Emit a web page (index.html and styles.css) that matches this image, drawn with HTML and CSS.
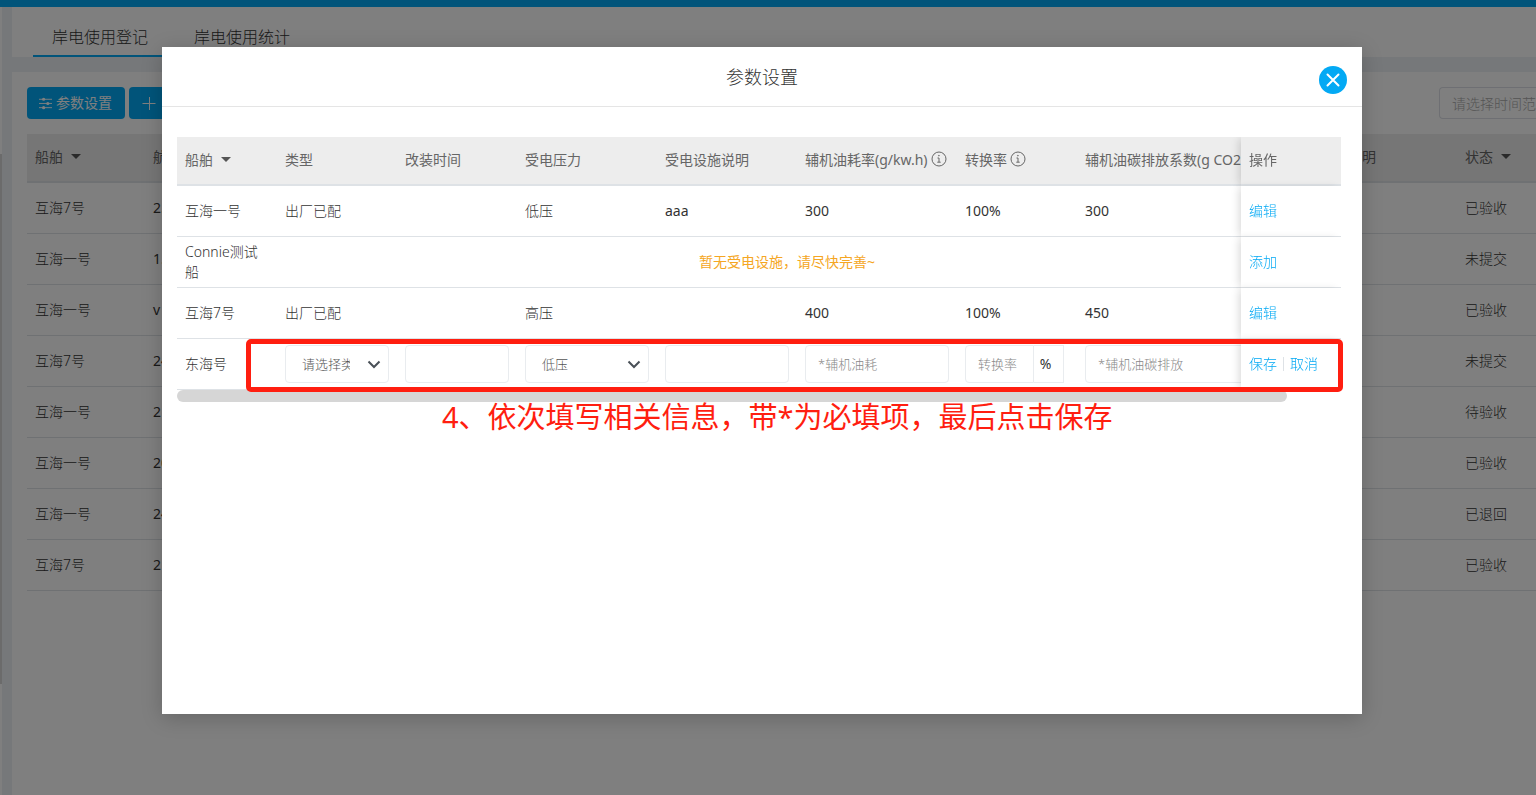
FILE: index.html
```html
<!DOCTYPE html>
<html lang="zh-CN">
<head>
<meta charset="utf-8">
<title>岸电使用登记</title>
<link rel="stylesheet" href="styles.css">
</head>
<body>
<div class="app">
  <header class="topbar"></header>
  <div class="layout">
    <aside class="side"><div class="side-thumb"></div></aside>
    <main class="main">
      <nav class="tabs">
        <a class="tab tab-active" href="#register">岸电使用登记</a>
        <a class="tab" href="#stats">岸电使用统计</a>
      </nav>
      <section class="card">
        <div class="toolbar">
          <button class="btn" type="button">
            <svg width="13" height="14" viewBox="0 0 14 14" fill="none" stroke="currentColor"><path d="M0 3h14M0 7.500h14M0 12h14"/><g fill="currentColor" stroke="none"><circle cx="5" cy="3" r="1.700"/><circle cx="9.500" cy="7.500" r="1.700"/><circle cx="5" cy="12" r="1.700"/></g></svg>
            <span>参数设置</span>
          </button>
          <button class="btn btn-add" type="button" aria-label="新增">
            <svg width="16" height="16" viewBox="0 0 16 16" fill="none" stroke="currentColor"><path d="M1.500 8.500h13M8.500 2v13"/></svg>
          </button>
          <input class="search" type="text" placeholder="请选择时间范围" aria-label="时间范围">
        </div>
        <table class="grid">
          <colgroup><col class="c-ship"><col><col class="c-note"><col class="c-state"></colgroup>
          <thead>
            <tr><th>船舶<i class="caret"></i></th><th>航次</th><th>说明</th><th>状态<i class="caret"></i></th></tr>
          </thead>
          <tbody>
            <tr><td>互海7号</td><td class="num">2.</td><td></td><td>已验收</td></tr>
            <tr><td>互海一号</td><td class="num">1.</td><td></td><td>未提交</td></tr>
            <tr><td>互海一号</td><td class="num">v</td><td></td><td>已验收</td></tr>
            <tr><td>互海7号</td><td class="num">24</td><td></td><td>未提交</td></tr>
            <tr><td>互海一号</td><td class="num">2</td><td></td><td>待验收</td></tr>
            <tr><td>互海一号</td><td class="num">20</td><td></td><td>已验收</td></tr>
            <tr><td>互海一号</td><td class="num">24</td><td></td><td>已退回</td></tr>
            <tr><td>互海7号</td><td class="num">2</td><td></td><td>已验收</td></tr>
          </tbody>
        </table>
      </section>
    </main>
  </div>
</div>

<div class="overlay">
  <div class="modal" role="dialog" aria-labelledby="modal-title">
    <div class="modal-head">
      <h1 class="modal-title" id="modal-title">参数设置</h1>
      <button class="close" type="button" aria-label="关闭">
        <svg width="28" height="28" viewBox="0 0 28 28" fill="none" stroke="#fff" stroke-width="2" stroke-linecap="round"><path d="M8.500 8.500l11 11M19.500 8.500l-11 11"/></svg>
      </button>
    </div>
    <div class="modal-body">
      <div class="panel">
        <div class="scroller">
          <table class="grid params">
            <colgroup><col class="w100"><col class="w120"><col class="w120"><col class="w140"><col class="w140"><col class="w160"><col class="w120"><col class="w220"><col class="w100"></colgroup>
            <thead>
              <tr>
                <th>船舶<i class="caret"></i></th><th>类型</th><th>改装时间</th><th>受电压力</th><th>受电设施说明</th>
                <th>辅机油耗率(g/kw.h)<svg class="info" viewBox="0 0 16 16" fill="none" stroke="currentColor"><circle cx="8" cy="8" r="7"/><path d="M6.500 7h1.500v4M6.300 11.200h3.400"/><circle cx="7.900" cy="4.700" r=".4"/></svg></th>
                <th>转换率<svg class="info" viewBox="0 0 16 16" fill="none" stroke="currentColor"><circle cx="8" cy="8" r="7"/><path d="M6.500 7h1.500v4M6.300 11.200h3.400"/><circle cx="7.900" cy="4.700" r=".4"/></svg></th>
                <th>辅机油碳排放系数(g CO2</th><th class="pin">操作</th>
              </tr>
            </thead>
            <tbody>
              <tr><td>互海一号</td><td>出厂已配</td><td></td><td>低压</td><td class="num">aaa</td><td class="num">300</td><td class="num">100%</td><td class="num">300</td><td class="pin"><a class="link" href="#edit">编辑</a></td></tr>
              <tr><td class="wrap">Connie测试船</td><td class="empty" colspan="7">暂无受电设施，请尽快完善~</td><td class="pin"><a class="link" href="#add">添加</a></td></tr>
              <tr><td>互海7号</td><td>出厂已配</td><td></td><td>高压</td><td></td><td class="num">400</td><td class="num">100%</td><td class="num">450</td><td class="pin"><a class="link" href="#edit">编辑</a></td></tr>
              <tr>
                <td>东海号</td>
                <td><div class="pick"><select class="field" aria-label="类型"><option>请选择类型</option></select><svg class="chev" viewBox="0 0 14 14" fill="none" stroke="#495057" stroke-width="2"><path d="M1.500 4.500L7 10l5.500-5.500"/></svg></div></td>
                <td><input class="field" type="text" aria-label="改装时间"></td>
                <td><div class="pick"><select class="field" aria-label="受电压力"><option>低压</option></select><svg class="chev" viewBox="0 0 14 14" fill="none" stroke="#495057" stroke-width="2"><path d="M1.500 4.500L7 10l5.500-5.500"/></svg></div></td>
                <td><input class="field" type="text" aria-label="受电设施说明"></td>
                <td><input class="field" type="text" placeholder="*辅机油耗" aria-label="辅机油耗率"></td>
                <td><div class="group"><input class="field" type="text" placeholder="转换率" aria-label="转换率"><span class="addon">%</span></div></td>
                <td><input class="field" type="text" placeholder="*辅机油碳排放" aria-label="辅机油碳排放系数"></td>
                <td class="pin"><div class="actions"><a class="link" href="#save">保存</a><span class="sep"></span><a class="link" href="#cancel">取消</a></div></td>
              </tr>
            </tbody>
          </table>
        </div>
        <div class="mark"></div>
      </div>
      <div class="hbar"></div>
      <p class="note">4、依次填写相关信息，带*为必填项，最后点击保存</p>
    </div>
  </div>
</div>
</body>
</html>
```

FILE: styles.css
```css
* { box-sizing: border-box; }

body {
  margin: 0;
  height: 100vh;
  overflow: hidden;
  position: relative;
  font-family: "Noto Sans", "Noto Sans CJK SC", sans-serif;
  font-size: 14px;
  line-height: 20px;
  color: #333;
}

button, input, select { font: inherit; }
a { text-decoration: none; color: inherit; }

.app { display: flex; flex-direction: column; height: 100%; background: #edf1f5; }
.topbar { height: 7px; background: #03a9f4; flex: none; }
.layout { display: flex; flex: 1; min-height: 0; gap: 10px; }
.side { width: 2px; background: #fff; padding-top: 147px; }
.side-thumb { height: 530px; background: #d6d6d6; }
.main { flex: 1; min-width: 0; display: flex; flex-direction: column; gap: 15px; }

.tabs { display: flex; height: 50px; padding-left: 21px; background: #fff; font-size: 16px; font-weight: 300; gap: 8px; }
.tab { padding: 20px 19px 0; }
.tab-active { border-bottom: 2px solid #03a9f4; }

.card { flex: 1; background: #fff; padding: 15px 0 0 15px; }
.toolbar { display: flex; gap: 4px; margin-bottom: 15px; }
.btn {
  display: flex; align-items: center; gap: 4px;
  height: 32px; padding: 0 13px 0 12px;
  border: 0; border-radius: 4px;
  background: #03a9f4; color: #fff;
}
.btn-add { width: 80px; }
.search {
  margin-left: auto; width: 97px; height: 32px; padding: 0 0 0 12px;
  border: 1px solid #dcdfe6; border-right: 0; border-radius: 4px 0 0 4px;
  background: #fff; font-weight: 300;
}
.search::placeholder { color: #aaa; }

.grid { width: 100%; table-layout: fixed; border-collapse: separate; border-spacing: 0; }
.grid th {
  height: 49px; padding: 0 8px 2px;
  text-align: left; font-weight: 400; white-space: nowrap;
  color: #666; background: #ededed; border-bottom: 2px solid #dee2e6;
}
.grid td { height: 51px; padding: 0 8px; border-bottom: 1px solid #dee2e6; font-weight: 300; }
.grid .num { font-weight: 400; }
.c-ship { width: 118px; }
.c-note { width: 117px; }
.c-state { width: 79px; }
.caret {
  display: inline-block; margin-left: 8px; vertical-align: 3px;
  border: 5px solid transparent; border-top-color: #555; border-bottom: 0;
}

.overlay {
  position: absolute; inset: 0;
  display: flex; justify-content: center;
  padding: 47px 12px 81px 0;
  background: rgba(0, 0, 0, .5);
}
.modal { width: 1200px; max-width: 100%; background: #fff; box-shadow: 0 4px 20px rgba(0, 0, 0, .2); }
.modal-head {
  display: flex; align-items: center; height: 60px; padding: 0 15px 0 43px;
  border-bottom: 1px solid #e5e5e5;
}
.modal-title { flex: 1; margin: 0; text-align: center; font-size: 18px; line-height: 24px; font-weight: 300; }
.close { display: flex; margin-top: 6px; padding: 0; border: 0; border-radius: 50%; background: #03a9f4; }
.modal-body { padding: 30px 21px 0 15px; }

.panel { position: relative; }
.scroller { overflow: hidden; }
.params { width: 1220px; }
.w100 { width: 100px; }
.w120 { width: 120px; }
.w140 { width: 140px; }
.w160 { width: 160px; }
.w220 { width: 220px; }
.info { width: 16px; height: 16px; margin-left: 3px; vertical-align: -2px; }
.pin { position: sticky; right: 0; box-shadow: -4px 0 8px -2px rgba(0, 0, 0, .15); }
.params td.pin { background: #fff; }
.params td.empty { text-align: center; color: #f5a623; font-weight: 400; }
.params td.wrap { word-break: break-all; }
.link { color: #03a9f4; }
.actions { display: flex; align-items: center; gap: 6px; white-space: nowrap; }
.sep { width: 1px; height: 14px; background: #dee2e6; }

.field {
  display: block; width: 100%; height: 38px; padding: 0 12px;
  border: 1px solid #e9ecef; border-radius: 4px;
  background: #fff; color: #555; font-size: 13px; font-weight: 300;
}
.field::placeholder { color: #888; }
select.field { appearance: none; padding: 0 38px 0 16px; }
.pick { position: relative; }
.chev { position: absolute; right: 8px; top: 12px; width: 14px; height: 14px; pointer-events: none; }
.group { display: flex; width: 99px; }
.group .field { flex: 1; min-width: 0; border-radius: 4px 0 0 4px; }
.addon {
  display: flex; align-items: center; justify-content: center; width: 30px; padding-right: 6px;
  border: 1px solid #e9ecef; border-left: 0; font-weight: 400;
}

.mark {
  position: absolute; left: 69px; right: -2px; bottom: -2px; height: 53px;
  border: 5px solid #ff1e10; border-radius: 5px; pointer-events: none; z-index: 2;
}
.hbar { width: 95.4%; height: 12px; border-radius: 6px; background: #d6d6d6; }
.note { margin: 0; padding-left: 265px; font-size: 29px; line-height: 30px; font-weight: 400; color: #ff1e10; white-space: nowrap; }
```
